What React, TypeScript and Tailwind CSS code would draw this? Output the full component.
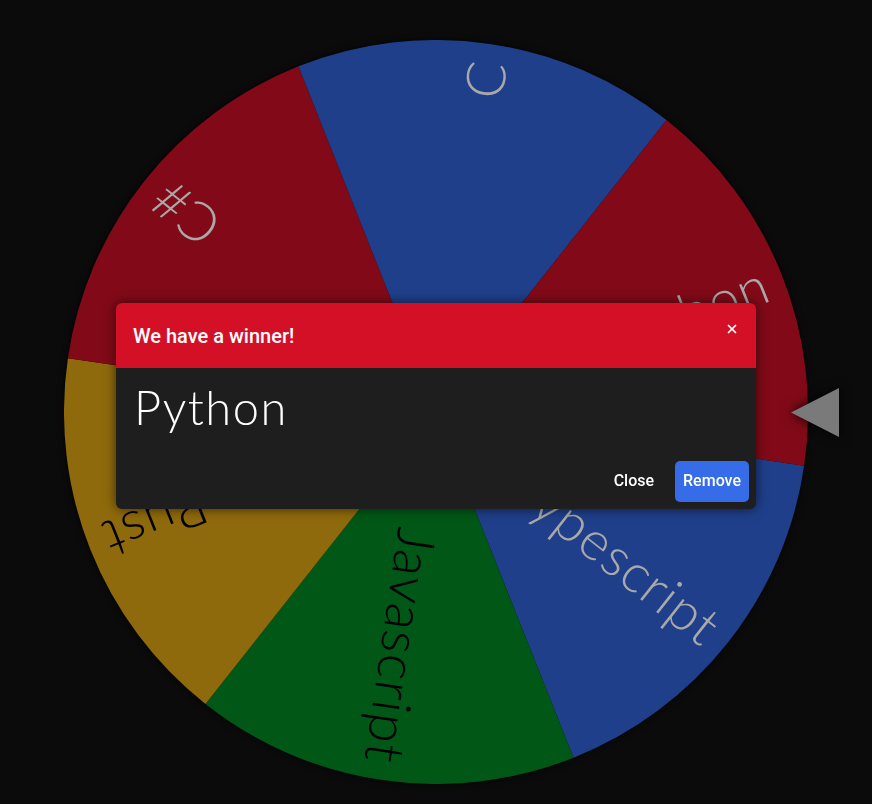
import { X } from "lucide-react";

type Slice = { label: string; fill: string; ink: string };

// wheel slices, clockwise starting just below the pointer
const slices: Slice[] = [
  { label: "Typescript", fill: "#1f3f8a", ink: "#a9a9a9" },
  { label: "Javascript", fill: "#015816", ink: "#000000" },
  { label: "Rust", fill: "#8f6a0c", ink: "#000000" },
  { label: "C#", fill: "#820a18", ink: "#a9a9a9" },
  { label: "C", fill: "#1f3f8a", ink: "#a9a9a9" },
  { label: "Python", fill: "#820a18", ink: "#a9a9a9" },
];

const SIZE = 744;
const R = SIZE / 2;
const START = 8.3; // degrees, first boundary

function point(deg: number, r: number) {
  const a = (deg * Math.PI) / 180;
  return [R + r * Math.cos(a), R + r * Math.sin(a)];
}

function Wheel() {
  const step = 360 / slices.length;

  return (
    <svg width={SIZE} height={SIZE} viewBox={`0 0 ${SIZE} ${SIZE}`} className="block">
      {slices.map((s, i) => {
        const a0 = START + i * step;
        const a1 = a0 + step;
        const [x0, y0] = point(a0, R);
        const [x1, y1] = point(a1, R);
        return (
          <path
            key={s.label + i}
            d={`M ${R} ${R} L ${x0} ${y0} A ${R} ${R} 0 0 1 ${x1} ${y1} Z`}
            fill={s.fill}
          />
        );
      })}
      {slices.map((s, i) => {
        const mid = START + i * step + step / 2;
        return (
          <text
            key={"t" + i}
            x={R + 355}
            y={R}
            transform={`rotate(${mid} ${R} ${R})`}
            textAnchor="end"
            dominantBaseline="central"
            fill={s.ink}
            style={{ fontFamily: "Lato, 'Open Sans', sans-serif", fontWeight: 300, fontSize: 54, letterSpacing: 1 }}
          >
            {s.label}
          </text>
        );
      })}
    </svg>
  );
}

function WinnerDialog() {
  return (
    <div className="fixed inset-0 flex items-center justify-center pt-[7px]">
      <div className="w-[640px] rounded-md overflow-hidden bg-[#1e1e1e] shadow-[0_0_12px_rgba(0,0,0,0.6)] font-['Roboto',sans-serif]">
        <div className="h-[65px] bg-[#d41027] flex justify-between pl-[17px] pr-[17px]">
          <h2 className="self-center text-[20px] font-medium text-white pt-[1px]">We have a winner!</h2>
          <button className="self-start mt-[19px] text-white" aria-label="Close">
            <X size={14} strokeWidth={3} />
          </button>
        </div>
        <div className="px-[18px] pt-[16px] h-[93px]">
          <p className="text-[47px] leading-none font-light text-white tracking-[1.5px] font-['Lato',sans-serif]">
            Python
          </p>
        </div>
        <div className="flex justify-end items-center gap-[13px] pr-[7px] pb-[7px]">
          <button className="h-[41px] px-2 text-[16px] font-medium text-white">Close</button>
          <button className="h-[41px] px-2 rounded-[5px] bg-[#366ce8] text-[16px] font-medium text-white">
            Remove
          </button>
        </div>
      </div>
    </div>
  );
}

export default function App() {
  return (
    <div className="relative h-[804px] w-full overflow-hidden bg-[#0b0b0b] flex justify-center pt-[40px]">
      <div className="relative w-[744px] h-[744px] rounded-full shadow-[0_0_6px_rgba(0,0,0,0.8)]">
        <Wheel />
        {/* pointer */}
        <svg
          width="48"
          height="49"
          viewBox="0 0 48 49"
          className="absolute left-[727px] top-[348px] drop-shadow-[0_0_6px_rgba(0,0,0,0.9)]"
        >
          <polygon points="0,24.5 48,0 48,49" fill="#7a7a7a" />
        </svg>
      </div>
      <WinnerDialog />
    </div>
  );
}
